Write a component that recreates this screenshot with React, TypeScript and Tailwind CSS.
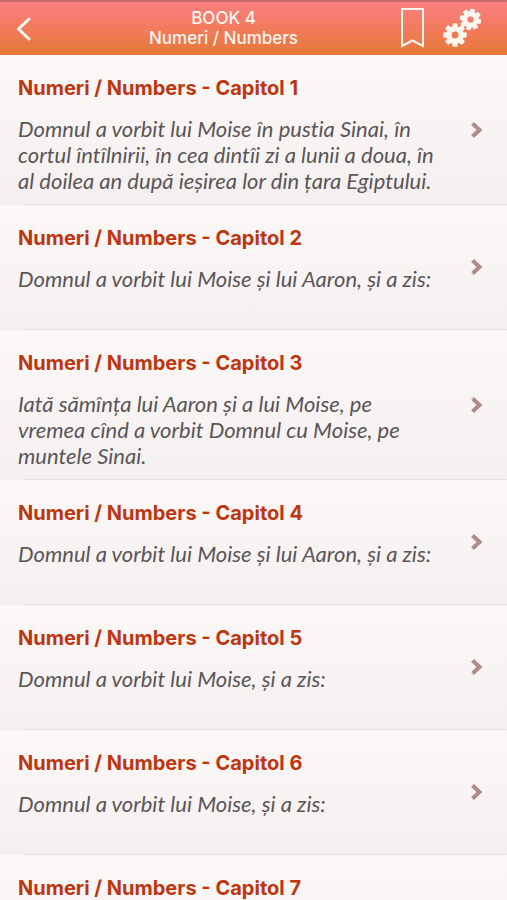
import { useId } from "react"

interface Chapter {
  number: number
  verse: string
}

const BOOK_TITLE = "Numeri / Numbers"

const chapters: Chapter[] = [
  {
    number: 1,
    verse:
      "Domnul a vorbit lui Moise în pustia Sinai, în cortul întîlnirii, în cea dintîi zi a lunii a doua, în al doilea an după ieșirea lor din țara Egiptului.",
  },
  { number: 2, verse: "Domnul a vorbit lui Moise și lui Aaron, și a zis:" },
  {
    number: 3,
    verse: "Iată sămînța lui Aaron și a lui Moise, pe vremea cînd a vorbit Domnul cu Moise, pe muntele Sinai.",
  },
  { number: 4, verse: "Domnul a vorbit lui Moise și lui Aaron, și a zis:" },
  { number: 5, verse: "Domnul a vorbit lui Moise, și a zis:" },
  { number: 6, verse: "Domnul a vorbit lui Moise, și a zis:" },
  { number: 7, verse: "Domnul a vorbit lui Moise, și a zis:" },
]

const teeth = [0, 45, 90, 135, 180, 225, 270, 315]

function Gear({ transform }: { transform: string }) {
  return (
    <g transform={transform}>
      <circle r="6.1" fill="none" stroke="currentColor" strokeWidth="5.4" />
      {teeth.map((angle) => (
        <path
          key={angle}
          d="M-3 -7 L-2.5 -11 Q-2.4 -11.7 -1.6 -11.7 H1.6 Q2.4 -11.7 2.5 -11 L3 -7 Z"
          fill="currentColor"
          transform={`rotate(${angle})`}
        />
      ))}
    </g>
  )
}

function Header() {
  return (
    <header className="grid h-[55px] grid-cols-[50px_1fr_110px] border-t-2 border-[#c66b6c] bg-gradient-to-b from-[#fb7f80] via-[#f27b5c] to-[#e67834] text-[#fff6f0]">
      <button type="button" aria-label="Back" className="flex items-center pl-4">
        <svg width="16" height="24" viewBox="0 0 16 24" fill="none" stroke="currentColor" strokeWidth="3" strokeLinecap="round" strokeLinejoin="round">
          <path d="M13 2 L2.5 12 L13 22" />
        </svg>
      </button>
      <h1 className="flex flex-col items-center pt-1.5 text-center text-[17px] leading-5 font-medium whitespace-nowrap">
        <span>BOOK 4</span>
        <span>{BOOK_TITLE}</span>
      </h1>
      <div className="flex items-start justify-end gap-4 pt-1.5 pr-[26px]">
        <button type="button" aria-label="Bookmark">
          <svg width="24" height="40" viewBox="0 0 24 40" fill="none" stroke="currentColor" strokeWidth="2">
            <path d="M1 1 H22 V38 L11.5 32.5 L1 38 Z" />
          </svg>
        </button>
        <button type="button" aria-label="Settings">
          <svg width="40" height="40" viewBox="0 0 40 40">
            <Gear transform="translate(14 27)" />
            <Gear transform="translate(29.5 11.5) rotate(12) scale(0.92)" />
          </svg>
        </button>
      </div>
    </header>
  )
}

function ChapterRow({ chapter }: { chapter: Chapter }) {
  const titleId = useId()
  return (
    <li className="bg-gradient-to-b from-[#fcf8f7] to-[#f5f0f0]">
      <a href={`#chapter-${chapter.number}`} aria-labelledby={titleId} className="flex min-h-[124px] items-center pr-6 pl-[18px]">
        <div className="flex-1 self-stretch pt-[19px] pb-2.5">
          <h2 id={titleId} className="text-[20px] leading-7 font-bold text-[#bc3610]">
            {BOOK_TITLE} - Capitol {chapter.number}
          </h2>
          <p className="mt-3.5 pr-7 font-['Lato',sans-serif] text-[22px] leading-[26px] text-[#5a5657] italic [font-variant-ligatures:none]">
            {chapter.verse}
          </p>
        </div>
        <svg width="13" height="18" viewBox="0 0 13 18" fill="none" stroke="#b08a86" strokeWidth="4">
          <path d="M2.5 2.5 L9.5 9 L2.5 15.5" />
        </svg>
      </a>
      <div className="ml-6 h-px bg-[#e6e0e0]" />
    </li>
  )
}

export default function App() {
  return (
    <div className="h-screen overflow-hidden bg-[#fcf8f7] font-['Inter',sans-serif]">
      <Header />
      <ul>
        {chapters.map((chapter) => (
          <ChapterRow key={chapter.number} chapter={chapter} />
        ))}
      </ul>
    </div>
  )
}
